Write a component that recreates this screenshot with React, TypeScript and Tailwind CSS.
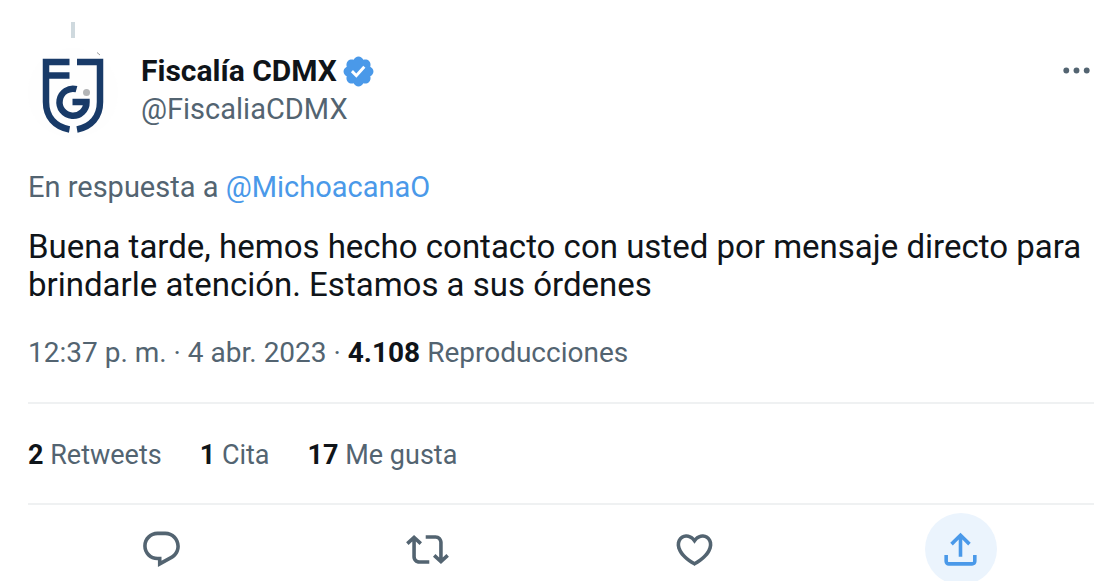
import type { ReactNode } from "react";

type StatProps = {
  count: string;
  label: string;
};

type ActionProps = {
  label: string;
  path: string;
  active?: boolean;
};

const STATS: StatProps[] = [
  { count: "2", label: "Retweets" },
  { count: "1", label: "Cita" },
  { count: "17", label: "Me gusta" },
];

const ACTIONS: ActionProps[] = [
  {
    label: "Responder",
    path: "M1.751 10c0-4.42 3.584-8 8.005-8h4.366c4.49 0 8.129 3.64 8.129 8.13 0 2.96-1.607 5.68-4.196 7.11l-8.054 4.46v-3.69h-.067c-4.49.1-8.183-3.51-8.183-8.01zm8.005-6c-3.317 0-6.005 2.69-6.005 6 0 3.37 2.77 6.08 6.138 6.01l.351-.01h1.761v2.3l5.087-2.81c1.951-1.08 3.163-3.13 3.163-5.36 0-3.39-2.744-6.13-6.129-6.13H9.756z",
  },
  {
    label: "Retwittear",
    path: "M4.5 3.88l4.432 4.14-1.364 1.46L5.5 7.55V16c0 1.1.896 2 2 2H13v2H7.5c-2.209 0-4-1.79-4-4V7.55L1.432 9.48.068 8.02 4.5 3.88zM16.5 6H11V4h5.5c2.209 0 4 1.79 4 4v8.45l2.068-1.93 1.364 1.46-4.432 4.14-4.432-4.14 1.364-1.46 2.068 1.93V8c0-1.1-.896-2-2-2z",
  },
  {
    label: "Me gusta",
    path: "M16.697 5.5c-1.222-.06-2.679.51-3.89 2.16l-.805 1.09-.806-1.09C9.984 6.01 8.526 5.44 7.304 5.5c-1.243.07-2.349.78-2.91 1.91-.552 1.12-.633 2.78.479 4.82 1.074 1.97 3.257 4.27 7.129 6.61 3.87-2.34 6.052-4.64 7.126-6.61 1.111-2.04 1.03-3.7.477-4.82-.561-1.13-1.666-1.84-2.908-1.91zm4.187 7.69c-1.351 2.48-4.001 5.12-8.379 7.67l-.503.3-.504-.3c-4.379-2.55-7.029-5.19-8.382-7.67-1.36-2.5-1.41-4.86-.514-6.67.887-1.79 2.647-2.91 4.601-3.01 1.651-.09 3.368.56 4.798 2.01 1.429-1.45 3.146-2.1 4.796-2.01 1.954.1 3.714 1.22 4.601 3.01.896 1.81.846 4.17-.514 6.67z",
  },
  {
    label: "Compartir",
    path: "M12 2.59l5.7 5.7-1.41 1.42L13 6.41V16h-2V6.41l-3.3 3.3-1.41-1.42L12 2.59zM21 15l-.02 3.51c0 1.38-1.12 2.49-2.5 2.49H5.5C4.11 21 3 19.88 3 18.5V15h2v3.5c0 .28.22.5.5.5h12.98c.28 0 .5-.22.5-.5L19 15h2z",
    active: true,
  },
];

function AvatarLogo() {
  return (
    <svg viewBox="0 0 90 90" className="size-[90px]" aria-hidden="true">
      <circle cx="45" cy="45" r="45" fill="#fefefe" />
      <g fill="none" stroke="#183a68" strokeWidth="6.500">
        <path d="M41.500 14H18V54c0 15 9 25 23.500 27.500" />
        <path d="M18 27.500H41.500" />
        <path d="M49 14H72V54c0 15-9 25-23 27.500" />
        <path d="M48.500 41.200a13.500 13.500 0 1 0 10 12.800H44.500" />
      </g>
      <circle cx="58.500" cy="44.500" r="3.500" fill="#b3b5b7" />
      <path d="M69 4.500l3 2.500" stroke="#9a9a9a" strokeWidth="1" />
    </svg>
  );
}

function VerifiedBadge() {
  return (
    <svg
      viewBox="0 0 24 24"
      className="size-[35px] shrink-0 fill-[#4a99e9]"
      role="img"
      aria-label="Cuenta verificada"
    >
      <path d="M22.25 12c0-1.43-.88-2.67-2.19-3.34.46-1.39.2-2.9-.81-3.91s-2.52-1.27-3.91-.81c-.66-1.31-1.91-2.19-3.34-2.19s-2.67.88-3.33 2.19c-1.4-.46-2.91-.2-3.92.81s-1.26 2.52-.8 3.91c-1.31.67-2.2 1.91-2.2 3.34s.89 2.67 2.2 3.34c-.46 1.39-.21 2.9.8 3.91s2.52 1.26 3.91.81c.67 1.31 1.91 2.19 3.34 2.19s2.68-.88 3.34-2.19c1.39.45 2.9.2 3.91-.81s1.27-2.52.81-3.91c1.31-.67 2.19-1.91 2.19-3.34zm-11.71 4.2L6.8 12.46l1.41-1.42 2.26 2.26 4.8-5.23 1.47 1.36-6.2 6.77z" />
    </svg>
  );
}

function Strong({ children }: { children: ReactNode }) {
  return <strong className="font-bold text-[#0f1419]">{children}</strong>;
}

function ActionButton({ label, path, active }: ActionProps) {
  return (
    <button
      type="button"
      aria-label={label}
      className={
        active
          ? "flex size-[72px] items-center justify-center rounded-full bg-[#ebf4fd] text-[#4a99e9]"
          : "flex size-[72px] items-center justify-center rounded-full text-[#536471]"
      }
    >
      <svg viewBox="0 0 24 24" className="size-[43px] fill-current" aria-hidden="true">
        <path d={path} />
      </svg>
    </button>
  );
}

export default function App() {
  return (
    <main className="h-screen overflow-hidden bg-white font-['Roboto',sans-serif] text-[29px] leading-[38px] text-[#536471]">
      <article className="pt-[22px] pr-[26px] pl-7">
        {/* thread line coming from the tweet above */}
        <div className="flex w-[90px] justify-center">
          <div className="h-4 w-1 bg-[#cfd9de]" />
        </div>

        <header className="mt-2.5 flex items-start">
          <AvatarLogo />
          <div className="ml-[23px] min-w-0 flex-1 pt-1">
            <div className="flex items-center gap-1">
              <h1 className="text-[30px] font-bold text-[#0f1419]">Fiscalía CDMX</h1>
              <VerifiedBadge />
            </div>
            <a href="#perfil" className="block">
              @FiscaliaCDMX
            </a>
          </div>
          <button type="button" aria-label="Más opciones" className="mt-[5px]">
            <svg viewBox="0 0 24 24" className="size-[35px] fill-current" aria-hidden="true">
              <circle cx="5" cy="12" r="2" />
              <circle cx="12" cy="12" r="2" />
              <circle cx="19" cy="12" r="2" />
            </svg>
          </button>
        </header>

        <p className="mt-[30px]">
          En respuesta a{" "}
          <a href="#michoacana" className="text-[#4a99e9]">
            @MichoacanaO
          </a>
        </p>

        <p className="mt-[22px] text-[33px] text-[#0f1419]">
          Buena tarde, hemos hecho contacto con usted por mensaje directo para
          brindarle atención. Estamos a sus órdenes
        </p>

        <p className="mt-[30px] text-[28px]">
          12:37 p. m. · 4 abr. 2023 · <Strong>4.108</Strong> Reproducciones
        </p>

        <div className="mt-[30px] flex gap-[38px] border-y-2 border-[#eff1f2] pt-8 pb-[29px] text-[27px]">
          {STATS.map((s) => (
            <a key={s.label} href="#actividad">
              <Strong>{s.count}</Strong> {s.label}
            </a>
          ))}
        </div>

        <div className="grid grid-cols-4 justify-items-center pt-2">
          {ACTIONS.map((a) => (
            <ActionButton key={a.label} {...a} />
          ))}
        </div>
      </article>
    </main>
  );
}
